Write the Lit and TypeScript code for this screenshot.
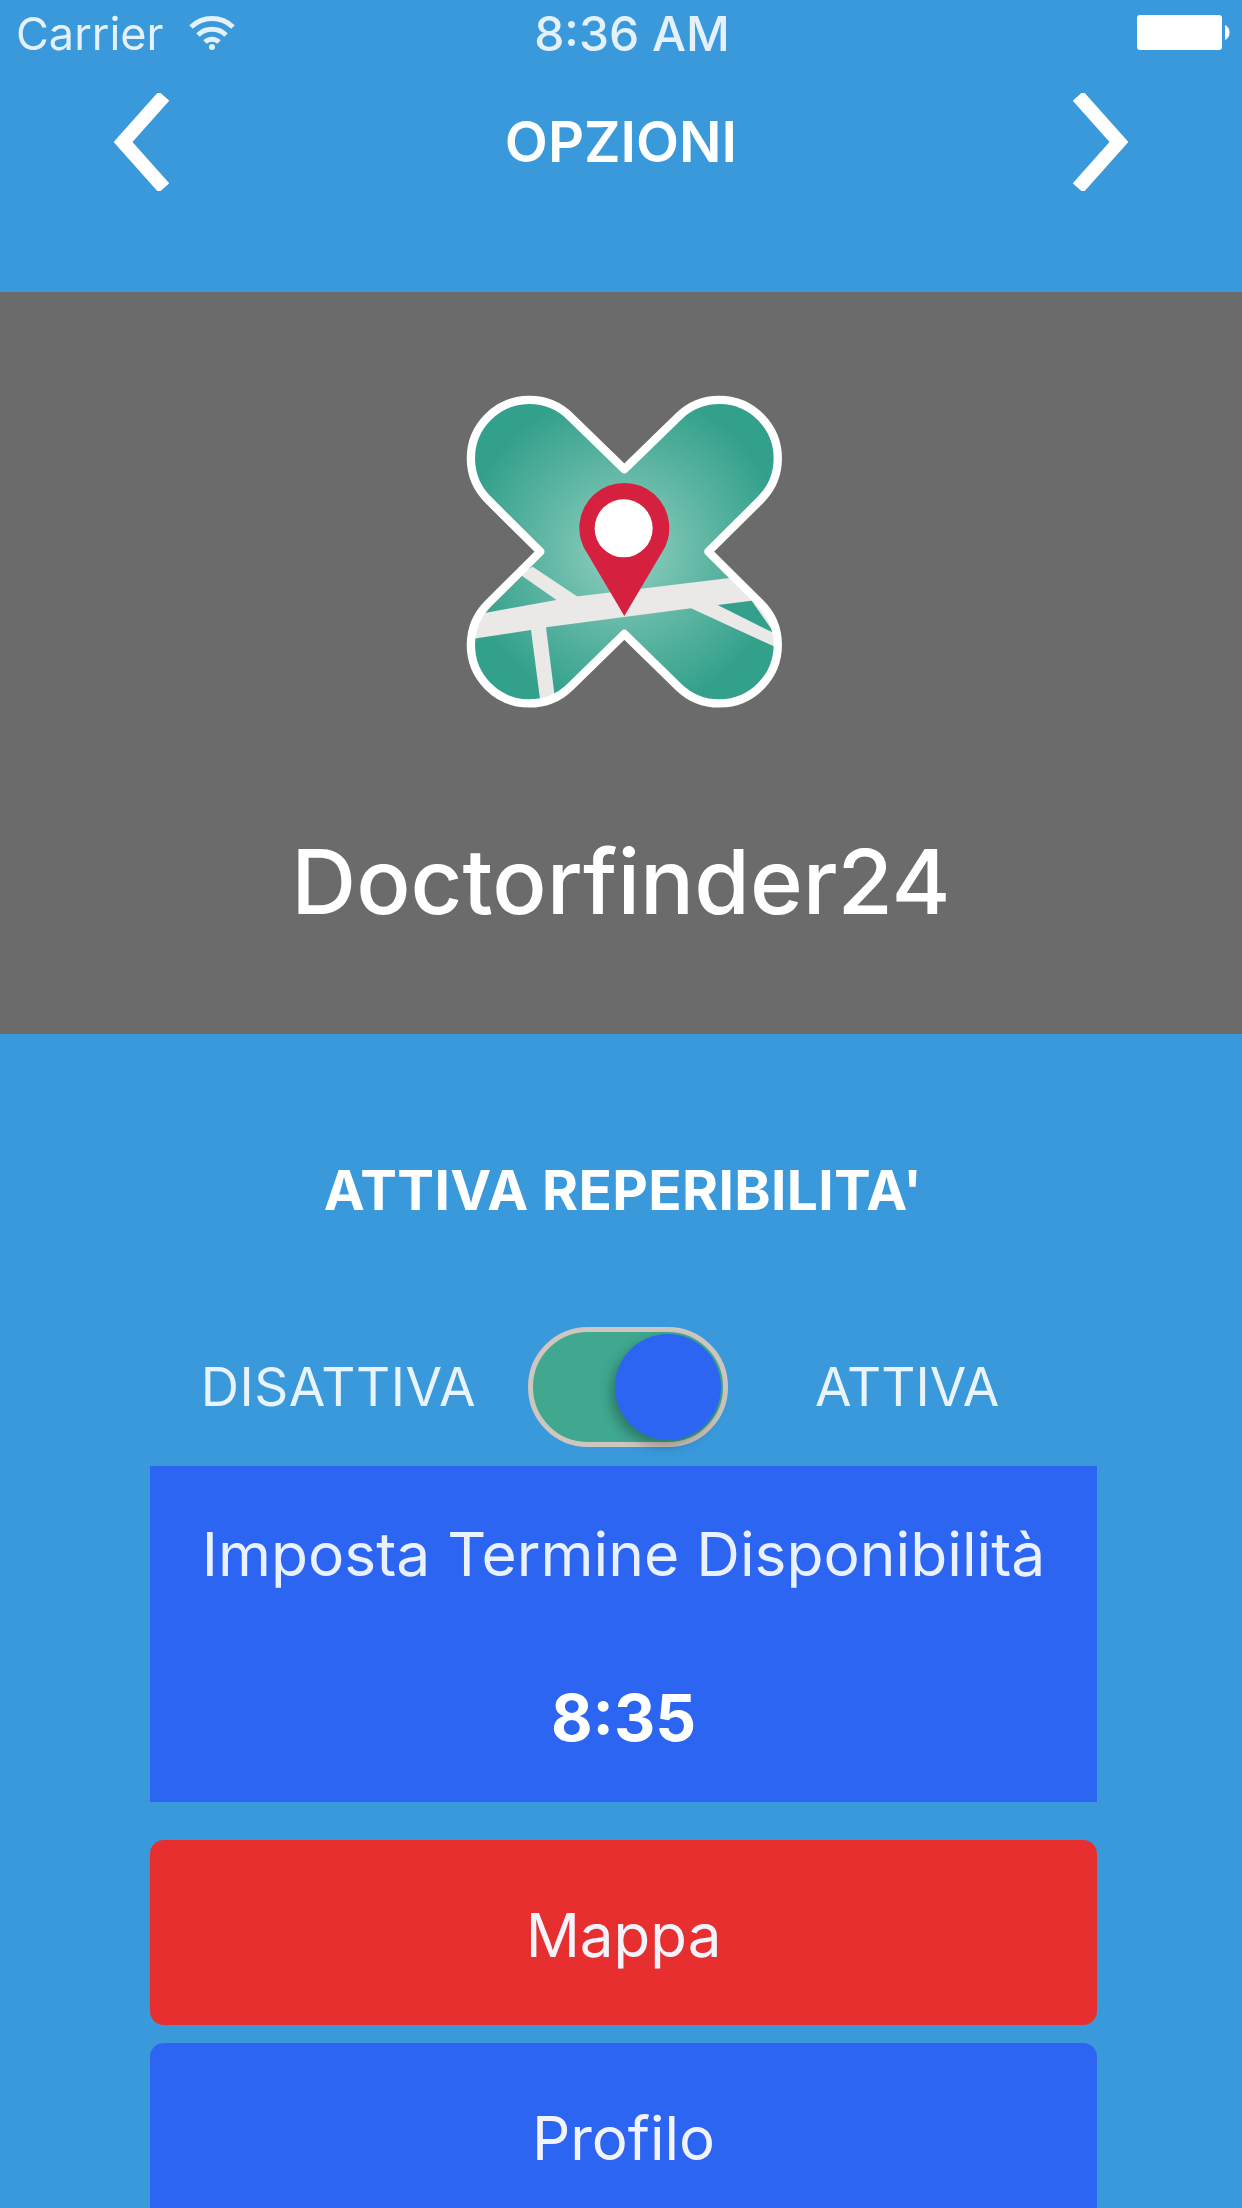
import { html, css, LitElement } from "lit";
import { customElement } from "lit/decorators.js";

@customElement("app-logo")
export class AppLogo extends LitElement {
  static styles = css`
    :host {
      display: block;
      width: 380px;
      height: 350px;
    }
    svg {
      display: block;
    }
  `;

  render() {
    const outline =
      "M580 298 L418 140 A175 175 0 0 0 172 390 L328 545 L172 700 A175 175 0 0 0 418 950 L580 792 L742 950 A175 175 0 0 0 988 700 L832 545 L988 390 A175 175 0 0 0 742 140 Z";
    return html`
      <svg width="380" height="350" viewBox="0 0 1140 1050">
        <defs>
          <radialGradient id="face" gradientUnits="userSpaceOnUse" cx="580" cy="540" r="480">
            <stop offset="0" stop-color="#93d0c0"></stop>
            <stop offset="0.55" stop-color="#5cb5a2"></stop>
            <stop offset="1" stop-color="#33a08c"></stop>
          </radialGradient>
          <clipPath id="shape"><path d=${outline}></path></clipPath>
        </defs>
        <path d=${outline} fill="url(#face)"></path>
        <g clip-path="url(#shape)" fill="#ebe8e8">
          <polygon points="90,742 430,680 890,625 1100,600 1100,862 780,715 345,772 375,1010 330,1010 300,780 90,812"></polygon>
          <polygon points="305,590 440,680 380,692 265,612"></polygon>
        </g>
        <polygon points="860,705 962,692 1030,790" fill="#33a08c"></polygon>
        <path d=${outline} fill="none" stroke="#ffffff" stroke-width="25" stroke-linejoin="round"></path>
        <path d="M580 738 L470 552 A135 135 0 1 1 690 552 Z" fill="#d6203f"></path>
        <circle cx="578" cy="475" r="87" fill="#ffffff"></circle>
      </svg>
    `;
  }
}

@customElement("app-root")
export class AppRoot extends LitElement {
  static styles = css`
    :host {
      display: block;
      width: 1242px;
      height: 2208px;
      overflow: hidden;
      background: #3a99db;
      color: #ffffff;
      font-family: Inter, "Liberation Sans", sans-serif;
      filter: blur(0.7px);
    }
    .status {
      height: 66px;
      padding: 0 10px 0 16px;
      display: grid;
      grid-template-columns: 1fr auto 1fr;
      align-items: center;
      font-size: 45px;
      color: #e4f1fa;
      box-sizing: border-box;
    }
    .status-left {
      display: flex;
      align-items: center;
      gap: 24px;
    }
    .status-right {
      display: flex;
      justify-content: flex-end;
    }
    .clock {
      margin-left: 16px;
      font-size: 48px;
      font-weight: 500;
    }
    .nav {
      height: 226px;
      padding: 0 113px 74px;
      display: flex;
      align-items: center;
      justify-content: space-between;
      box-sizing: border-box;
    }
    .nav-title {
      font-size: 56px;
      font-weight: 600;
    }
    .banner {
      height: 742px;
      background: #6b6b6b;
      padding-top: 78px;
      box-sizing: border-box;
      display: flex;
      flex-direction: column;
      align-items: center;
    }
    .app-name {
      margin-top: 110px;
      font-size: 90px;
      line-height: 104px;
      font-weight: 500;
    }
    .section-title {
      margin-top: 126px;
      padding-left: 4px;
      text-align: center;
      font-size: 55px;
      line-height: 60px;
      font-weight: 700;
      letter-spacing: 0.35px;
    }
    .switch-row {
      margin-top: 107px;
      height: 120px;
      display: grid;
      grid-template-columns: 528px 200px 1fr;
      align-items: center;
      font-size: 53px;
      color: #e8f3fb;
    }
    .off-label {
      text-align: right;
      padding-right: 52px;
      letter-spacing: 0.5px;
    }
    .on-label {
      padding-left: 87px;
    }
    .track {
      width: 200px;
      height: 120px;
      box-sizing: border-box;
      border: 5px solid #cfc6c0;
      border-radius: 60px;
      background: #3fa88f;
      display: flex;
      justify-content: flex-end;
    }
    .knob {
      width: 106px;
      height: 106px;
      margin: 2px 2px 0 0;
      border-radius: 50%;
      background: #2b65f2;
      box-shadow: -4px 6px 12px rgba(0, 0, 0, 0.28);
    }
    .stack {
      padding: 19px 145px 0 150px;
      display: flex;
      flex-direction: column;
    }
    .time-card {
      height: 336px;
      background: #2b65f2;
      display: flex;
      flex-direction: column;
      align-items: center;
      color: #e9f0fe;
    }
    .time-label {
      margin-top: 52px;
      font-size: 60.5px;
      line-height: 72px;
    }
    .time-value {
      margin-top: 92px;
      font-size: 64px;
      line-height: 72px;
      font-weight: 700;
      color: #ffffff;
    }
    .btn {
      height: 185px;
      padding-top: 4px;
      box-sizing: border-box;
      border-radius: 14px;
      display: flex;
      align-items: center;
      justify-content: center;
      font-size: 60px;
      color: #f3f3fb;
    }
    .map {
      margin-top: 38px;
      background: #e82f2f;
    }
    .profile {
      margin-top: 18px;
      background: #2b65f2;
    }
  `;

  render() {
    return html`
      <div class="status">
        <div class="status-left">
          <span>Carrier</span>
          <svg width="48" height="36" viewBox="0 0 48 36" fill="none" stroke="#e4f1fa" stroke-width="5">
            <path d="M3 12 A30 30 0 0 1 45 12"></path>
            <path d="M10 20 A20 20 0 0 1 38 20"></path>
            <path d="M17 27 A10 10 0 0 1 31 27"></path>
            <circle cx="24" cy="32" r="3" fill="#e4f1fa" stroke="none"></circle>
          </svg>
        </div>
        <span class="clock">8:36 AM</span>
        <div class="status-right">
          <svg width="95" height="38" viewBox="0 0 95 38" fill="#ffffff">
            <rect x="0" y="1" width="85" height="35" rx="3"></rect>
            <path d="M88 11 C94 13 94 24 88 26 Z"></path>
          </svg>
        </div>
      </div>
      <div class="nav">
        <svg width="56" height="98" viewBox="0 0 56 98" fill="none" stroke="#ffffff" stroke-width="14">
          <path d="M51 3 L10 49 L51 95" stroke-linejoin="miter"></path>
        </svg>
        <span class="nav-title">OPZIONI</span>
        <svg width="56" height="98" viewBox="0 0 56 98" fill="none" stroke="#ffffff" stroke-width="14">
          <path d="M5 3 L46 49 L5 95" stroke-linejoin="miter"></path>
        </svg>
      </div>
      <div class="banner">
        <app-logo></app-logo>
        <div class="app-name">Doctorfinder24</div>
      </div>
      <div class="section-title">ATTIVA REPERIBILITA'</div>
      <div class="switch-row">
        <span class="off-label">DISATTIVA</span>
        <div class="track"><div class="knob"></div></div>
        <span class="on-label">ATTIVA</span>
      </div>
      <div class="stack">
        <div class="time-card">
          <div class="time-label">Imposta Termine Disponibilità</div>
          <div class="time-value">8:35</div>
        </div>
        <div class="btn map">Mappa</div>
        <div class="btn profile">Profilo</div>
      </div>
    `;
  }
}
